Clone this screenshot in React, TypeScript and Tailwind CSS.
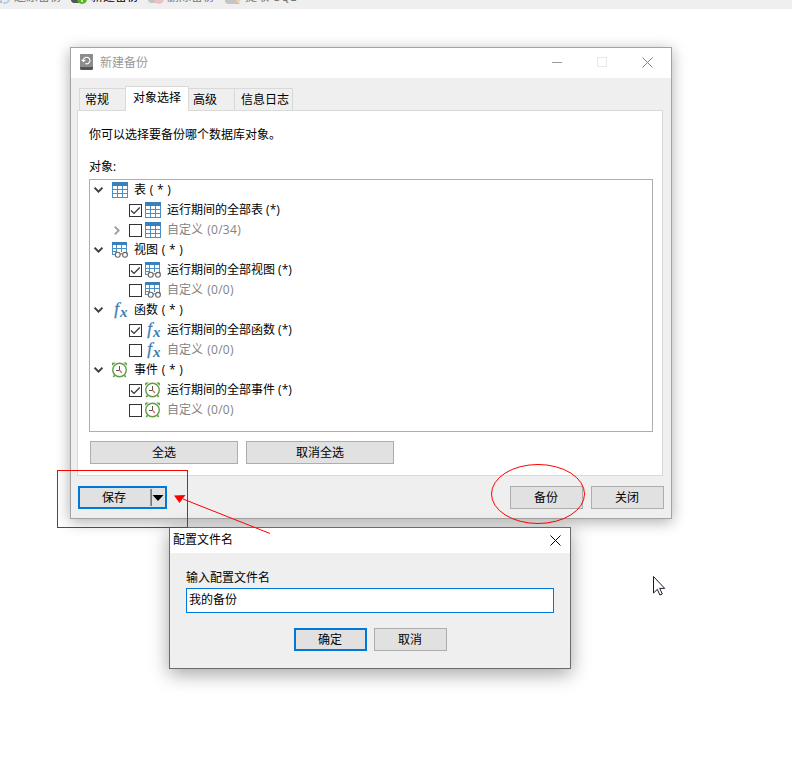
import type { ReactNode } from "react";
import clsx from "clsx";

type Kind = "table" | "view" | "function" | "event";

const groups: { kind: Kind; title: string; all: string; count: string; expandable?: boolean }[] = [
  { kind: "table", title: "表 ( * )", all: "运行期间的全部表 (*)", count: "(0/34)", expandable: true },
  { kind: "view", title: "视图 ( * )", all: "运行期间的全部视图 (*)", count: "(0/0)" },
  { kind: "function", title: "函数 ( * )", all: "运行期间的全部函数 (*)", count: "(0/0)" },
  { kind: "event", title: "事件 ( * )", all: "运行期间的全部事件 (*)", count: "(0/0)" },
];

function TableIcon() {
  return (
    <svg width="16" height="16" viewBox="0 0 16 16" shapeRendering="crispEdges">
      <rect width="16" height="16" fill="#4a90c8" />
      <path d="M0 0h16v4H0z" fill="#3a81bb" />
      <path
        fill="#fff"
        d="M1 4h4v3H1zM6 4h4v3H6zM11 4h4v3h-4zM1 8h4v3H1zM6 8h4v3H6zM11 8h4v3h-4zM1 12h4v3H1zM6 12h4v3H6zM11 12h4v3h-4z"
      />
    </svg>
  );
}

function ViewIcon() {
  return (
    <svg width="16" height="16" viewBox="0 0 16 16">
      <g shapeRendering="crispEdges">
        <path fill="#4a90c8" d="M0 0h15v10H0zM0 10h3v3H0z" />
        <path fill="#3a81bb" d="M0 0h15v3H0z" />
        <path fill="#fff" d="M1 3h3v3H1zM5 3h4v3H5zM10 3h4v3h-4zM1 7h3v2H1zM5 7h4v3H5zM10 7h4v3h-4zM1 10h3v2H1z" />
      </g>
      <g fill="#fff" stroke="#666" strokeWidth="1.1">
        <circle cx="5.7" cy="12.8" r="2.5" />
        <circle cx="13" cy="12.8" r="2.4" />
        <path fill="none" d="M8.2 12.2q1.1-1 2.3 0M3.4 11.6l1-1.4M15.3 11.6l-.8-1.4" />
      </g>
    </svg>
  );
}

function FunctionIcon() {
  return (
    <svg
      width="16"
      height="16"
      viewBox="0 0 16 16"
      fill="#3a7cb5"
      className="overflow-visible font-['Liberation_Serif',serif] italic"
    >
      <text x="2.2" y="12.3" fontSize="17" stroke="#3a7cb5" strokeWidth=".3">f</text>
      <text x="8" y="15" fontSize="15" fontWeight="700">x</text>
    </svg>
  );
}

function EventIcon() {
  return (
    <svg width="16" height="16" viewBox="0 0 16 16" fill="none">
      <path fill="#5f9e43" d="M0 3.8V1.6Q0 .4 1.4.4h2.4zM15 3.8V1.6Q15 .4 13.6.4h-2.4z" />
      <path stroke="#5f9e43" strokeWidth="1.6" d="m2.6 13.2-1.3 1.8M12.4 13.2l1.3 1.8" />
      <circle cx="7.5" cy="8" r="6.8" fill="#fff" stroke="#5f9e43" strokeWidth="1.4" />
      <path stroke="#555" d="M7.5 4v4.5H4" />
      <path stroke="#e0635c" strokeWidth="1.2" d="m7.5 8.2 2.4 2.8" />
    </svg>
  );
}

const icons: Record<Kind, () => ReactNode> = {
  table: TableIcon,
  view: ViewIcon,
  function: FunctionIcon,
  event: EventIcon,
};

function Checkbox({ checked }: { checked?: boolean }) {
  return (
    <svg width="13" height="13" viewBox="0 0 13 13" className="mr-[3px] shrink-0">
      <rect x=".5" y=".5" width="12" height="12" fill="#fff" stroke="#333" />
      {checked && <path d="m2 6.5 3 3 5.8-6" fill="none" stroke="#333" strokeWidth="1.2" />}
    </svg>
  );
}

function CloseIcon({ color }: { color: string }) {
  return (
    <svg width="11" height="11" viewBox="0 0 11 11" stroke={color}>
      <path d="m.5.5 10 10M10.5.5l-10 10" />
    </svg>
  );
}

function Button({ children, className, primary }: { children: ReactNode; className?: string; primary?: boolean }) {
  return (
    <button
      className={clsx(
        "flex h-[23px] items-center justify-center bg-[#e1e1e1] leading-none",
        primary ? "border-2 border-[#0078d7]" : "border border-[#adadad]",
        className,
      )}
    >
      {children}
    </button>
  );
}

function ObjectGroup({ group }: { group: (typeof groups)[number] }) {
  const Icon = icons[group.kind];
  return (
    <div>
      <div className="flex h-5 items-center pl-1">
        <svg width="9" height="6" viewBox="0 0 9 6" fill="none" stroke="#404040" strokeWidth="1.9" className="mr-[9px]">
          <path d="m.6.7 3.9 3.9L8.4.7" />
        </svg>
        <Icon />
        <span className="ml-1.5 [word-spacing:0.6px]">{group.title}</span>
      </div>
      <div className="flex h-5 items-center pl-[39px]">
        <Checkbox checked />
        <Icon />
        <span className="ml-1.5">{group.all}</span>
      </div>
      <div className="flex h-5 items-center pl-6 text-[#838383]">
        <span className="w-[15px]">
          {group.expandable && (
            <svg width="6" height="9" viewBox="0 0 6 9" fill="none" stroke="#a0a0a0" strokeWidth="1.9">
              <path d="m.8.6 3.9 3.9L.8 8.4" />
            </svg>
          )}
        </span>
        <Checkbox />
        <Icon />
        <span className="ml-1.5 [word-spacing:1px]">
          自定义 <span className="tracking-[0.3px]">{group.count}</span>
        </span>
      </div>
    </div>
  );
}

function Toolbar() {
  return (
    <div className="h-[9px] overflow-hidden bg-[#efefef] text-[#777]">
      <div className="-mt-3 flex h-[18px] items-center leading-[18px]">
        <div className="flex w-[71px] items-center">
          <svg width="14" height="18" viewBox="0 0 14 18" fill="none" stroke="#b9cfe4" strokeWidth="2">
            <path d="M0 14h2" stroke="#bbb" />
            <circle cx="5" cy="11" r="4" strokeDasharray="8 2" />
          </svg>
          还原备份
        </div>
        <div className="flex w-[77px] items-center text-black">
          <svg width="20" height="18" viewBox="0 0 20 18">
            <path d="M0 8h10v7H2l-2-2z" fill="#555" />
            <circle cx="11" cy="11" r="5" fill="#54b31e" />
            <path d="M11 8v6M8 11h6" stroke="#fff" strokeWidth="1.5" />
          </svg>
          新建备份
        </div>
        <div className="flex w-[77px] items-center">
          <svg width="19" height="18" viewBox="0 0 19 18">
            <path d="M0 8h10v7H2l-2-2z" fill="#c4c4c4" />
            <circle cx="11" cy="11" r="5" fill="#e9c3c3" />
          </svg>
          删除备份
        </div>
        <div className="flex items-center">
          <svg width="20" height="18" viewBox="0 0 20 18">
            <path d="M0 10h10l5 6H2l-2-2z" fill="#c4c4c4" />
            <path d="M8 9h8v3l-3 3z" fill="#ecd2ad" />
          </svg>
          <span className="tracking-[0.2px] [word-spacing:1px]">提取 SQL</span>
        </div>
      </div>
    </div>
  );
}

function BackupWindow() {
  return (
    <div className="absolute left-[70px] top-[47px] flex h-[472px] w-[602px] flex-col border border-[#a3a3a3] bg-[#efefef] shadow-[0_3px_14px_rgba(0,0,0,0.32)]">
      <div className="flex h-[30px] items-center bg-white pl-[9px] text-[#999]">
        <svg width="13" height="16" viewBox="0 0 13 16" className="mb-0.5 mr-[7px]">
          <rect width="13" height="16" rx="1.5" fill="#555" />
          <path d="M0 1.5Q0 0 1.5 0h10Q13 0 13 1.5V13H0z" fill="#8c8c8c" />
          <path d="M3.4 7.2a3.3 3.3 0 1 1 2 2.4M1.7 5.6l1.7 1.9 2-1.6" fill="none" stroke="#fff" strokeWidth="1.1" />
        </svg>
        <span className="flex-1">新建备份</span>
        <div className="mb-px flex w-[46px] justify-center pl-px">
          <div className="h-px w-2.5 bg-[#999]" />
        </div>
        <div className="mb-0.5 flex w-[46px] justify-center">
          <div className="size-2.5 border border-[#e8e8e8]" />
        </div>
        <div className="mb-px flex w-[46px] justify-center pr-px">
          <CloseIcon color="#808080" />
        </div>
      </div>

      <div className="flex items-end pl-2 pt-2 leading-[22px]">
        <div className="h-[22px] w-[46px] border-l border-t border-[#d9d9d9] pl-[5px]">常规</div>
        <div className="relative -mb-px h-[25px] w-16 border border-b-0 border-[#d9d9d9] bg-white pl-[7px]">对象选择</div>
        <div className="h-[22px] w-[46px] border-r border-t border-[#d9d9d9] pl-1">高级</div>
        <div className="h-[22px] w-[58px] border-r border-t border-[#d9d9d9] pl-[6px]">信息日志</div>
      </div>
      <div className="ml-1.5 h-[366px] w-[586px] border border-[#d9d9d9] bg-white pl-[11px] pt-[15px] leading-[18px]">
        <p>你可以选择要备份哪个数据库对象。</p>
        <p className="mt-[14px]">对象:</p>
        <div className="mt-[3px] h-[253px] w-[564px] border border-[#adadad]">
          {groups.map((group) => (
            <ObjectGroup key={group.kind} group={group} />
          ))}
        </div>
        <div className="ml-px mt-[9px] flex gap-2">
          <Button className="w-[148px]">全选</Button>
          <Button className="w-[148px]">取消全选</Button>
        </div>
      </div>

      <div className="flex gap-2 px-[7px] pt-2.5">
        <Button primary className="mr-auto w-[89px]">
          <span className="flex-1 pr-0.5">保存</span>
          <span className="h-[17px] w-0.5 border-r border-[#777] bg-[#999]" />
          <svg width="12" height="6" viewBox="0 0 12 6" className="mr-px">
            <path d="M.5 0h11L6 6z" />
          </svg>
        </Button>
        <Button className="w-[73px] pr-px">备份</Button>
        <Button className="w-[73px] pr-px">关闭</Button>
      </div>
    </div>
  );
}

function ProfileDialog() {
  return (
    <div className="absolute left-[169px] top-[527px] flex h-[142px] w-[402px] flex-col border border-[#6b6b6b] bg-[#efefef] shadow-[0_5px_18px_rgba(0,0,0,0.36)]">
      <div className="flex h-[25px] items-center justify-between bg-white pl-[3px] pr-[9px]">
        <span className="mb-0.5">配置文件名</span>
        <CloseIcon color="#000" />
      </div>
      <div className="flex flex-col px-4 pt-4 leading-[18px]">
        <label>输入配置文件名</label>
        <input
          className="mt-px h-[25px] border border-[#0078d7] bg-white px-0.5 pb-[3px] outline-none"
          defaultValue="我的备份"
        />
        <div className="mt-[15px] flex gap-[7px] pl-[108px]">
          <Button primary className="w-[73px] pr-px">确定</Button>
          <Button className="w-[73px] pr-px">取消</Button>
        </div>
      </div>
    </div>
  );
}

// red marks and the mouse pointer over the windows
function Annotations() {
  return (
    <svg className="pointer-events-none absolute left-0 top-0" width="792" height="772" fill="none" stroke="#f00">
      <rect x="57.5" y="470.5" width="130" height="57" />
      <ellipse cx="538" cy="494" rx="46.5" ry="29.5" />
      <path d="M270 533.5 183 499" />
      <path d="m174 495.5 11.5-.5-6 8z" fill="#f00" stroke="none" />
      <path
        d="M653.5 576.5v16.5l3.8-3.6 2.6 5.6 2.4-1-2.6-5.6h5z"
        fill="#fff"
        stroke="#1a1a2a"
      />
    </svg>
  );
}

function App() {
  return (
    <div className="relative h-[772px] w-[792px] overflow-hidden bg-white font-['Open_Sans','Noto_Sans_CJK_SC',sans-serif] text-[12px] text-black">
      <Toolbar />
      <BackupWindow />
      <ProfileDialog />
      <Annotations />
    </div>
  );
}

export default App;
